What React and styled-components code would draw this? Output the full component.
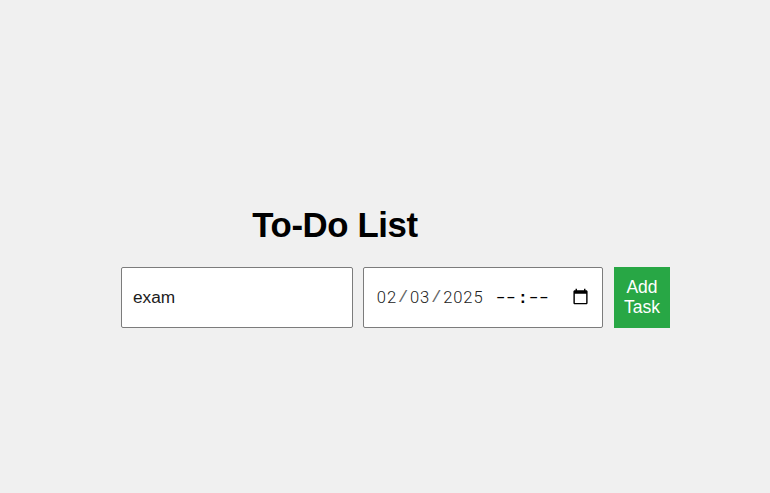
import React, { useState } from "react";
import styled, { createGlobalStyle } from "styled-components";

const GlobalStyle = createGlobalStyle`
  * { box-sizing: border-box; }
  body {
    margin: 0;
    background: #f0f0f0;
    font-family: "Liberation Sans", Arial, sans-serif;
    color: #000;
  }
`;

const Page = styled.main`
  height: 493px;
  padding: 204px 100px 0 121px;
`;

const Title = styled.h1`
  margin: 0;
  width: 428px;
  height: 63px;
  font-size: 34.8px;
  letter-spacing: -0.4px;
  line-height: 41px;
  text-align: center;
`;

const Form = styled.form`
  display: flex;
  height: 61px;
`;

const Field = styled.div`
  display: flex;
  align-items: center;
  width: ${(p) => p.$width}px;
  margin-right: ${(p) => p.$gap}px;
  padding: 0 11px;
  background: #fff;
  border: 1px solid #7c7c7c;
  border-radius: 2px;
`;

const TextInput = styled.input`
  width: 100%;
  border: 0;
  outline: 0;
  padding: 0;
  background: transparent;
  color: #1c1c1c;
  font: 17.3px "Liberation Sans", Arial, sans-serif;
`;

const DateValue = styled.div`
  display: flex;
  flex: 1;
  height: 20px;
`;

const Segment = styled.span`
  display: flex;
  padding: 0 1.4px;
  color: #222;
  font: 300 16.6px/20px Roboto, sans-serif;
`;

const EmptySegment = styled.span`
  width: 15.9px;
  margin-right: 7.1px;
  text-indent: -1.2px;
  font: 17px/20px "Liberation Mono", monospace;
  letter-spacing: -3.23px;
  transform: scaleX(1.45);
  transform-origin: left center;
`;

const Cell = styled.span`
  width: 10.1px;
  text-align: center;
`;

const Separator = styled.span`
  width: 10.2px;
  padding-top: ${(p) => (p.$strong ? 1 : 0)}px;
  text-align: center;
  color: ${(p) => (p.$strong ? "#000" : "#666")};
  font: ${(p) => (p.$strong ? 700 : 400)} 17px/20px "Liberation Mono", monospace;
`;

const Icon = styled.svg`
  display: block;
  width: 17px;
  height: 17px;
  margin: 0 2px 2px 0;
`;

const AddButton = styled.button`
  width: 56px;
  border: 0;
  padding: 0 0 1px;
  background: #28a745;
  color: #fff;
  font: 17.5px/20px "Liberation Sans", Arial, sans-serif;
`;

function DatePart({ value }) {
  return (
    <Segment>
      {[...value].map((char, i) => (
        <Cell key={i}>{char}</Cell>
      ))}
    </Segment>
  );
}

function CalendarIcon() {
  return (
    <Icon viewBox="0 0 24 24">
      <path d="M20 3h-1V1h-2v2H7V1H5v2H4c-1.1 0-2 .9-2 2v16c0 1.1.9 2 2 2h16c1.1 0 2-.9 2-2V5c0-1.1-.9-2-2-2zm0 18H4V8h16v13z" />
    </Icon>
  );
}

export default function App() {
  const [task, setTask] = useState("exam");
  return (
    <Page>
      <GlobalStyle />
      <Title>To-Do List</Title>
      <Form onSubmit={(e) => e.preventDefault()}>
        <Field $width={232} $gap={10}>
          <TextInput value={task} onChange={(e) => setTask(e.target.value)} />
        </Field>
        <Field $width={240} $gap={11}>
          <DateValue>
            <DatePart value="02" />
            <Separator>/</Separator>
            <DatePart value="03" />
            <Separator>/</Separator>
            <DatePart value="2025" />
            <Separator />
            <EmptySegment>--</EmptySegment>
            <Separator $strong>:</Separator>
            <EmptySegment>--</EmptySegment>
          </DateValue>
          <CalendarIcon />
        </Field>
        <AddButton>Add<br />Task</AddButton>
      </Form>
    </Page>
  );
}
